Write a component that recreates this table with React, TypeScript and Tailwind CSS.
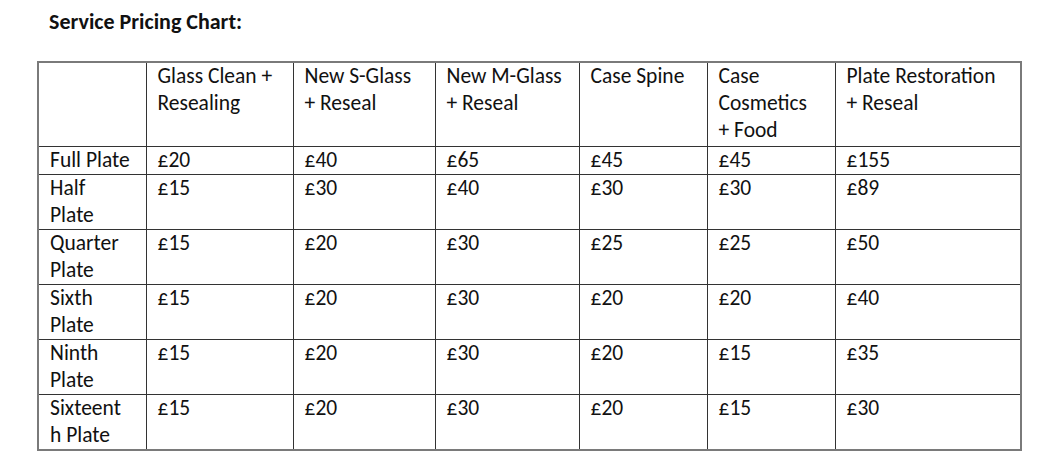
import React from 'react';

const COLS = [
  {label: ['Glass Clean +', 'Resealing'], w: 'w-[147px]'},
  {label: ['New S-Glass', '+ Reseal'], w: 'w-[142px]'},
  {label: ['New M-Glass', '+ Reseal'], w: 'w-[144px]'},
  {label: ['Case Spine'], w: 'w-[128px]'},
  {label: ['Case', 'Cosmetics', '+ Food'], w: 'w-[128px]'},
  {label: ['Plate Restoration', '+ Reseal'], w: 'w-[186px]'},
];

const ROWS: {name: string[]; prices: string[]}[] = [
  {name: ['Full Plate'], prices: ['£20', '£40', '£65', '£45', '£45', '£155']},
  {name: ['Half', 'Plate'], prices: ['£15', '£30', '£40', '£30', '£30', '£89']},
  {name: ['Quarter', 'Plate'], prices: ['£15', '£20', '£30', '£25', '£25', '£50']},
  {name: ['Sixth', 'Plate'], prices: ['£15', '£20', '£30', '£20', '£20', '£40']},
  {name: ['Ninth', 'Plate'], prices: ['£15', '£20', '£30', '£20', '£15', '£35']},
  {name: ['Sixteent', 'h Plate'], prices: ['£15', '£20', '£30', '£20', '£15', '£30']},
];

function Lines({lines}: {lines: string[]}) {
  return (
    <>
      {lines.map((l, i) => (
        <div key={i} className="whitespace-nowrap">{l}</div>
      ))}
    </>
  );
}

export default function App() {
  return (
    <div className="w-[1056px] h-[470px] bg-white text-[#111] font-['Carlito','Lato',sans-serif]">
      <h1 className="pl-[49px] pt-[8px] text-[22px] font-bold leading-[28px]">Service Pricing Chart:</h1>

      <table className="ml-[37px] mt-[25px] table-fixed border-collapse border-2 border-[#7a7a7a] text-[21.5px] leading-[27px]">
        <thead>
          <tr>
            <th className="w-[108px] border border-[#333] align-top" />
            {COLS.map((c, i) => (
              <th key={i} className={`${c.w} h-[84px] border border-[#333] px-[11px] align-top text-left font-normal`}>
                <Lines lines={c.label} />
              </th>
            ))}
          </tr>
        </thead>
        <tbody>
          {ROWS.map((r, ri) => (
            <tr key={ri}>
              <td className="border border-[#333] px-[11px] align-top">
                <Lines lines={r.name} />
              </td>
              {r.prices.map((p, pi) => (
                <td key={pi} className="border border-[#333] px-[11px] align-top">
                  {p}
                </td>
              ))}
            </tr>
          ))}
        </tbody>
      </table>
    </div>
  );
}
